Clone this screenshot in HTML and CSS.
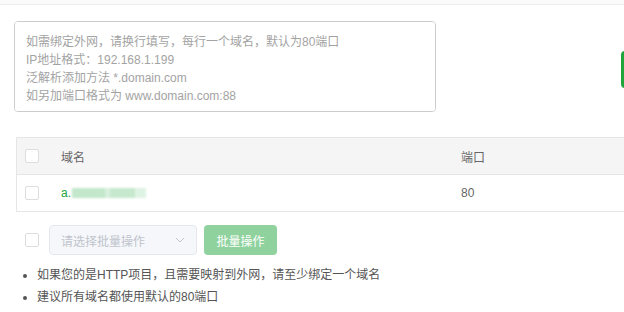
FILE: index.html
```html
<!DOCTYPE html>
<html lang="zh-CN">
<head>
    <meta charset="UTF-8">
    <title>域名管理</title>
    <link rel="stylesheet" href="styles.css">
</head>
<body>
    <div class="topbar"></div>

    <div class="add-row">
        <textarea class="domain-input" placeholder="如需绑定外网，请换行填写，每行一个域名，默认为80端口&#10;IP地址格式：192.168.1.199&#10;泛解析添加方法 *.domain.com&#10;如另加端口格式为 www.domain.com:88"></textarea>
        <button class="add-btn" aria-label="添加"></button>
    </div>

    <div class="domain-table">
        <div class="tr thead">
            <div class="td check"><span class="box"></span></div>
            <div class="td">域名</div>
            <div class="td">端口</div>
        </div>
        <div class="tr">
            <div class="td check"><span class="box"></span></div>
            <div class="td"><span class="link">a.</span><span class="blur"></span></div>
            <div class="td">80</div>
        </div>
    </div>

    <div class="batch-row">
        <span class="box"></span>
        <div class="select">
            <span>请选择批量操作</span>
            <svg width="10" height="6" viewBox="0 0 10 6"><path d="M1 1l4 4 4-4" fill="none" stroke="#c0c4cc" stroke-width="1"/></svg>
        </div>
        <button class="batch-btn">批量操作</button>
    </div>

    <ul class="tips">
        <li>如果您的是HTTP项目，且需要映射到外网，请至少绑定一个域名</li>
        <li>建议所有域名都使用默认的80端口</li>
    </ul>
</body>
</html>
```

FILE: styles.css
```css
body {
    margin: 0;
    overflow: hidden;
    background: #fff;
    font-family: "Liberation Sans", "Noto Sans CJK SC", sans-serif;
    font-size: 12px;
    color: #666;
}

.topbar {
    height: 4px;
    background: #fafafa;
    border-bottom: 1px solid #eee;
}

.add-row {
    display: flex;
    align-items: center;
    margin: 16px 0 0 14px;
    height: 91px;
    overflow: hidden;
}

.domain-input {
    flex-shrink: 0;
    width: 422px;
    height: 91px;
    box-sizing: border-box;
    padding: 11px 11px 9px;
    border: 1px solid #ccc;
    border-radius: 4px;
    resize: none;
    font-family: inherit;
    font-size: 12px;
    line-height: 18px;
    outline: none;
}

.domain-input::placeholder {
    color: #a3a3a3;
}

/* only its left edge shows inside the frame */
.add-btn {
    flex-shrink: 0;
    width: 60px;
    height: 37px;
    margin: 5px 0 0 185px;
    border: none;
    border-radius: 4px;
    background: #20a53a;
}

.domain-table {
    margin: 25px 0 0 16px;
    border-top: 1px solid #e6e6e6;
    border-left: 1px solid #e6e6e6;
}

.tr {
    display: grid;
    grid-template-columns: 44px 400px 1fr;
    height: 36px;
    align-items: center;
    border-bottom: 1px solid #e6e6e6;
}

.thead {
    background: #f5f5f5;
}

.td.check {
    padding-left: 8px;
    display: flex;
}

.box {
    display: inline-block;
    width: 14px;
    height: 14px;
    box-sizing: border-box;
    border: 1px solid #ddd;
    border-radius: 2px;
    background: #fff;
}

.link {
    color: #20a53a;
}

.blur {
    display: inline-block;
    width: 74px;
    height: 10px;
    margin-left: 1px;
    vertical-align: -1px;
    background: linear-gradient(90deg, #c2e7ca 0 45%, #d8f0de 45% 52%, #c6e8cd 52% 85%, #dff3e4 85%);
    filter: blur(0.8px);
}

.batch-row {
    display: flex;
    align-items: center;
    margin: 13px 0 0 25px;
    height: 30px;
}

.select {
    display: flex;
    align-items: center;
    justify-content: space-between;
    width: 148px;
    height: 30px;
    box-sizing: border-box;
    margin-left: 10px;
    padding: 0 11px 0 11px;
    border: 1px solid #e4e7ed;
    border-radius: 4px;
    background: #f5f7fa;
    color: #c0c4cc;
    font-size: 12px;
}

.batch-btn {
    margin-left: 7px;
    width: 73px;
    height: 30px;
    border: none;
    border-radius: 4px;
    background: #8fd29d;
    color: #fff;
    font-family: inherit;
    font-size: 12px;
}

.tips {
    margin: 9px 0 0 0;
    padding-left: 37px;
    color: #555;
    line-height: 22px;
}

.tips li {
    list-style: disc;
}
```
